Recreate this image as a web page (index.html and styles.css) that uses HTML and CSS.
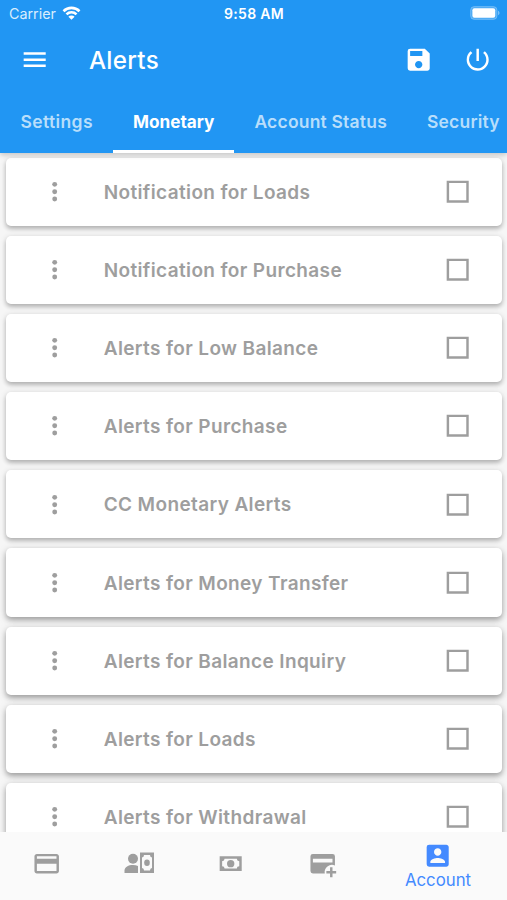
FILE: index.html
```
<!DOCTYPE html>
<html lang="en">
<head>
    <meta charset="UTF-8">
    <meta name="viewport" content="width=device-width, initial-scale=1.0">
    <title>Alerts</title>
    <link rel="stylesheet" href="styles.css">
</head>
<body>
    <!-- icons used more than once -->
    <svg class="sprite">
        <symbol id="more" viewBox="0 0 24 24">
            <circle cx="12" cy="6" r="2"/><circle cx="12" cy="12" r="2"/><circle cx="12" cy="18" r="2"/>
        </symbol>
        <symbol id="box" viewBox="0 0 24 24">
            <path d="M3 3h18v18H3zM5 5v14h14V5z" fill-rule="evenodd"/>
        </symbol>
    </svg>

    <div class="app">
        <header class="header">
            <div class="status-bar">
                <div class="carrier">
                    <span>Carrier</span>
                    <svg class="wifi" viewBox="0 0 18 14">
                        <path d="M1 5.2a11.4 11.4 0 0 1 16 0M4 8.3a7 7 0 0 1 10 0" fill="none" stroke="#fff" stroke-width="2.6"/>
                        <path d="M9 13.8 5.9 10.7a4.4 4.4 0 0 1 6.2 0z" fill="#fff"/>
                    </svg>
                </div>
                <div class="time">9:58 AM</div>
                <svg class="battery" viewBox="0 0 30 14">
                    <rect x=".6" y=".6" width="26.4" height="12.8" rx="3.6" fill="#fff" fill-opacity=".2" stroke="#fff" stroke-opacity=".25"/>
                    <rect x="2.4" y="2.3" width="22.8" height="9.4" rx="2" fill="#fff"/>
                    <path d="M28 4.8c2 .7 2 3.7 0 4.4z" fill="#fff" fill-opacity=".4"/>
                </svg>
            </div>

            <div class="toolbar">
                <svg class="icon" viewBox="0 0 24 24"><path d="M3 18h18v-2H3v2zm0-5h18v-2H3v2zm0-7v2h18V6H3z"/></svg>
                <h1 class="title">Alerts</h1>
                <svg class="icon" viewBox="0 0 24 24"><path d="M17 3H5a2 2 0 0 0-2 2v14a2 2 0 0 0 2 2h14c1.1 0 2-.9 2-2V7l-4-4zm-5 16c-1.66 0-3-1.34-3-3s1.34-3 3-3 3 1.34 3 3-1.34 3-3 3zm3-10H5V5h10v4z"/></svg>
                <svg class="icon power" viewBox="0 0 24 24"><path d="M13 3h-2v10h2V3zm4.83 2.17l-1.42 1.42A6.92 6.92 0 0 1 19 12c0 3.87-3.13 7-7 7A6.995 6.995 0 0 1 7.58 6.58L6.17 5.17A8.932 8.932 0 0 0 3 12a9 9 0 0 0 18 0c0-2.74-1.23-5.18-3.17-6.83z"/></svg>
            </div>

            <nav class="tabs">
                <div class="tab">Settings</div>
                <div class="tab active">Monetary</div>
                <div class="tab">Account Status</div>
                <div class="tab">Security</div>
            </nav>
        </header>

        <main class="list">
            <div class="card">
                <svg class="icon"><use href="#more"/></svg>
                <span class="label">Notification for Loads</span>
                <svg class="icon"><use href="#box"/></svg>
            </div>
            <div class="card">
                <svg class="icon"><use href="#more"/></svg>
                <span class="label">Notification for Purchase</span>
                <svg class="icon"><use href="#box"/></svg>
            </div>
            <div class="card">
                <svg class="icon"><use href="#more"/></svg>
                <span class="label">Alerts for Low Balance</span>
                <svg class="icon"><use href="#box"/></svg>
            </div>
            <div class="card">
                <svg class="icon"><use href="#more"/></svg>
                <span class="label">Alerts for Purchase</span>
                <svg class="icon"><use href="#box"/></svg>
            </div>
            <div class="card">
                <svg class="icon"><use href="#more"/></svg>
                <span class="label">CC Monetary Alerts</span>
                <svg class="icon"><use href="#box"/></svg>
            </div>
            <div class="card low">
                <svg class="icon"><use href="#more"/></svg>
                <span class="label">Alerts for Money Transfer</span>
                <svg class="icon"><use href="#box"/></svg>
            </div>
            <div class="card low">
                <svg class="icon"><use href="#more"/></svg>
                <span class="label">Alerts for Balance Inquiry</span>
                <svg class="icon"><use href="#box"/></svg>
            </div>
            <div class="card low">
                <svg class="icon"><use href="#more"/></svg>
                <span class="label">Alerts for Loads</span>
                <svg class="icon"><use href="#box"/></svg>
            </div>
            <div class="card low">
                <svg class="icon"><use href="#more"/></svg>
                <span class="label">Alerts for Withdrawal</span>
                <svg class="icon"><use href="#box"/></svg>
            </div>
        </main>

        <nav class="bottom-nav">
            <div class="nav-item">
                <svg class="icon" viewBox="0 0 24 24"><path d="M20 4H4c-1.11 0-2 .89-2 2v12c0 1.11.89 2 2 2h16c1.11 0 2-.89 2-2V6c0-1.11-.89-2-2-2zm0 14H4v-6h16v6zm0-10H4V6h16v2z"/></svg>
            </div>
            <div class="nav-item">
                <!-- person with a banknote -->
                <svg class="icon wide" viewBox="0 0 30 24">
                    <circle cx="9" cy="7.7" r="5"/>
                    <path d="M.5 22v-2.500c0-3.500 4-5.500 8.500-5.500 1.800 0 3.500.3 5 .9V22z"/>
                    <path fill-rule="evenodd" d="M16 1.500h14V22H16zM20 4a2.500 2.500 0 0 1-2 2.500v10.500a2.500 2.500 0 0 1 2 2.500h6a2.500 2.500 0 0 1 2-2.500V6.500A2.500 2.500 0 0 1 26 4z"/>
                    <ellipse cx="23" cy="11.8" rx="2.8" ry="3.2"/>
                </svg>
            </div>
            <div class="nav-item">
                <svg class="icon" viewBox="0 0 24 24"><path fill-rule="evenodd" d="M3 6h18v12H3zM7 8a2 2 0 0 1-2 2v4a2 2 0 0 1 2 2h10a2 2 0 0 1 2-2v-4a2 2 0 0 1-2-2z"/><circle cx="12" cy="12" r="3"/></svg>
            </div>
            <div class="nav-item">
                <svg class="icon" viewBox="0 0 24 24"><path fill-rule="evenodd" d="M4 4h16a2 2 0 0 1 2 2v7.4A6 6 0 0 0 13.7 20H4a2 2 0 0 1-2-2V6a2 2 0 0 1 2-2zM4 8v3h16V8z"/><path d="M18 15h2v3h3v2h-3v3h-2v-3h-3v-2h3z"/></svg>
            </div>
            <div class="nav-item active">
                <svg class="icon" viewBox="0 0 24 24"><path d="M3 5v14a2 2 0 0 0 2 2h14c1.1 0 2-.9 2-2V5c0-1.100-.9-2-2-2H5a2 2 0 0 0-2 2zm12 4c0 1.660-1.340 3-3 3s-3-1.340-3-3 1.340-3 3-3 3 1.340 3 3zm-9 8c0-2 4-3.100 6-3.100s6 1.100 6 3.100v1H6v-1z"/></svg>
                <span>Account</span>
            </div>
        </nav>
    </div>
</body>
</html>
```
FILE: styles.css
```
* {
    margin: 0;
    padding: 0;
    box-sizing: border-box;
}

body {
    font-family: Inter, 'Liberation Sans', sans-serif;
    background: #fafafa;
    overflow: hidden;
}

.sprite {
    display: none;
}

.app {
    height: 100vh;
    display: flex;
    flex-direction: column;
}

.icon {
    display: block;
    width: 29.4px;
    height: 29.4px;
    flex-shrink: 0;
    fill: currentColor;
}

.header {
    height: 152.5px;
    flex-shrink: 0;
    background: #2196f3;
    color: #fff;
    position: relative;
    z-index: 1;
    box-shadow: 0 2px 5px rgba(0,0,0,0.2);
}

.status-bar {
    height: 27px;
    padding: 0 7px 0 9px;
    display: grid;
    grid-template-columns: 1fr auto 1fr;
    align-items: center;
    font-size: 14.3px;
}

.carrier {
    display: flex;
    align-items: center;
    gap: 6px;
}

.carrier span {
    color: #d9edfd;
}

.wifi {
    width: 19px;
    height: 14px;
    margin-top: -2px;
}

.time {
    font-weight: 600;
    font-size: 14px;
    letter-spacing: 0.3px;
    margin-right: 1px;
}

.battery {
    width: 30px;
    height: 14px;
    margin-top: -1px;
    justify-self: end;
}

.toolbar {
    height: 65px;
    padding: 0 15px 0 20px;
    display: flex;
    align-items: center;
}

.title {
    flex: 1;
    margin-left: 39.5px;
    padding-top: 1px;
    font-size: 24.2px;
    font-weight: 500;
    letter-spacing: 0.3px;
}

.power {
    margin-left: 29px;
}

.tabs {
    height: 60.5px;
    display: flex;
    overflow: hidden;
}

.tab {
    padding: 2px 19.6px 0 20.4px;
    display: flex;
    align-items: center;
    flex-shrink: 0;
    white-space: nowrap;
    font-size: 17.5px;
    font-weight: 600;
    letter-spacing: 0.2px;
    color: #b8defb;
    border-bottom: 3px solid transparent;
}

.tab:first-child {
    letter-spacing: 0.4px;
}

.tab.active {
    color: #fff;
    font-size: 17.2px;
    font-weight: 700;
    letter-spacing: 0;
    border-bottom-color: #fff;
}

.list {
    flex: 1;
    min-height: 0;
    overflow: hidden;
    padding: 5px 5px 0 6px;
    display: flex;
    flex-direction: column;
    gap: 10px;
    background: #f6f6f6;
}

.card {
    height: 68.2px;
    flex-shrink: 0;
    padding: 0 29.5px 0 34px;
    display: flex;
    align-items: center;
    background: #fff;
    border-radius: 5px;
    color: #9e9e9e;
    box-shadow: 0 3px 4px rgba(0,0,0,0.2), 0 1px 6px rgba(0,0,0,0.14);
}

/* shadows get heavier down the list */
.card.low {
    box-shadow: 0 3px 5px rgba(0,0,0,0.24), 0 2px 8px rgba(0,0,0,0.18);
}

.label {
    flex: 1;
    margin-left: 34.3px;
    padding-top: 1px;
    font-size: 19px;
    font-weight: 600;
    letter-spacing: 0.37px;
}

.bottom-nav {
    height: 68.5px;
    flex-shrink: 0;
    background: #fafafa;
    display: flex;
    padding-left: 1px;
    color: #9e9e9e;
    position: relative;
}

.nav-item {
    width: 92px;
    padding-top: 17.6px;
    display: flex;
    flex-direction: column;
    align-items: center;
}

.nav-item.active {
    flex: 1;
    padding-top: 9px;
    color: #448aff;
    font-size: 16.8px;
    line-height: 21px;
}

.wide {
    width: 30px;
    height: 24px;
    margin-top: 2px;
}
```
